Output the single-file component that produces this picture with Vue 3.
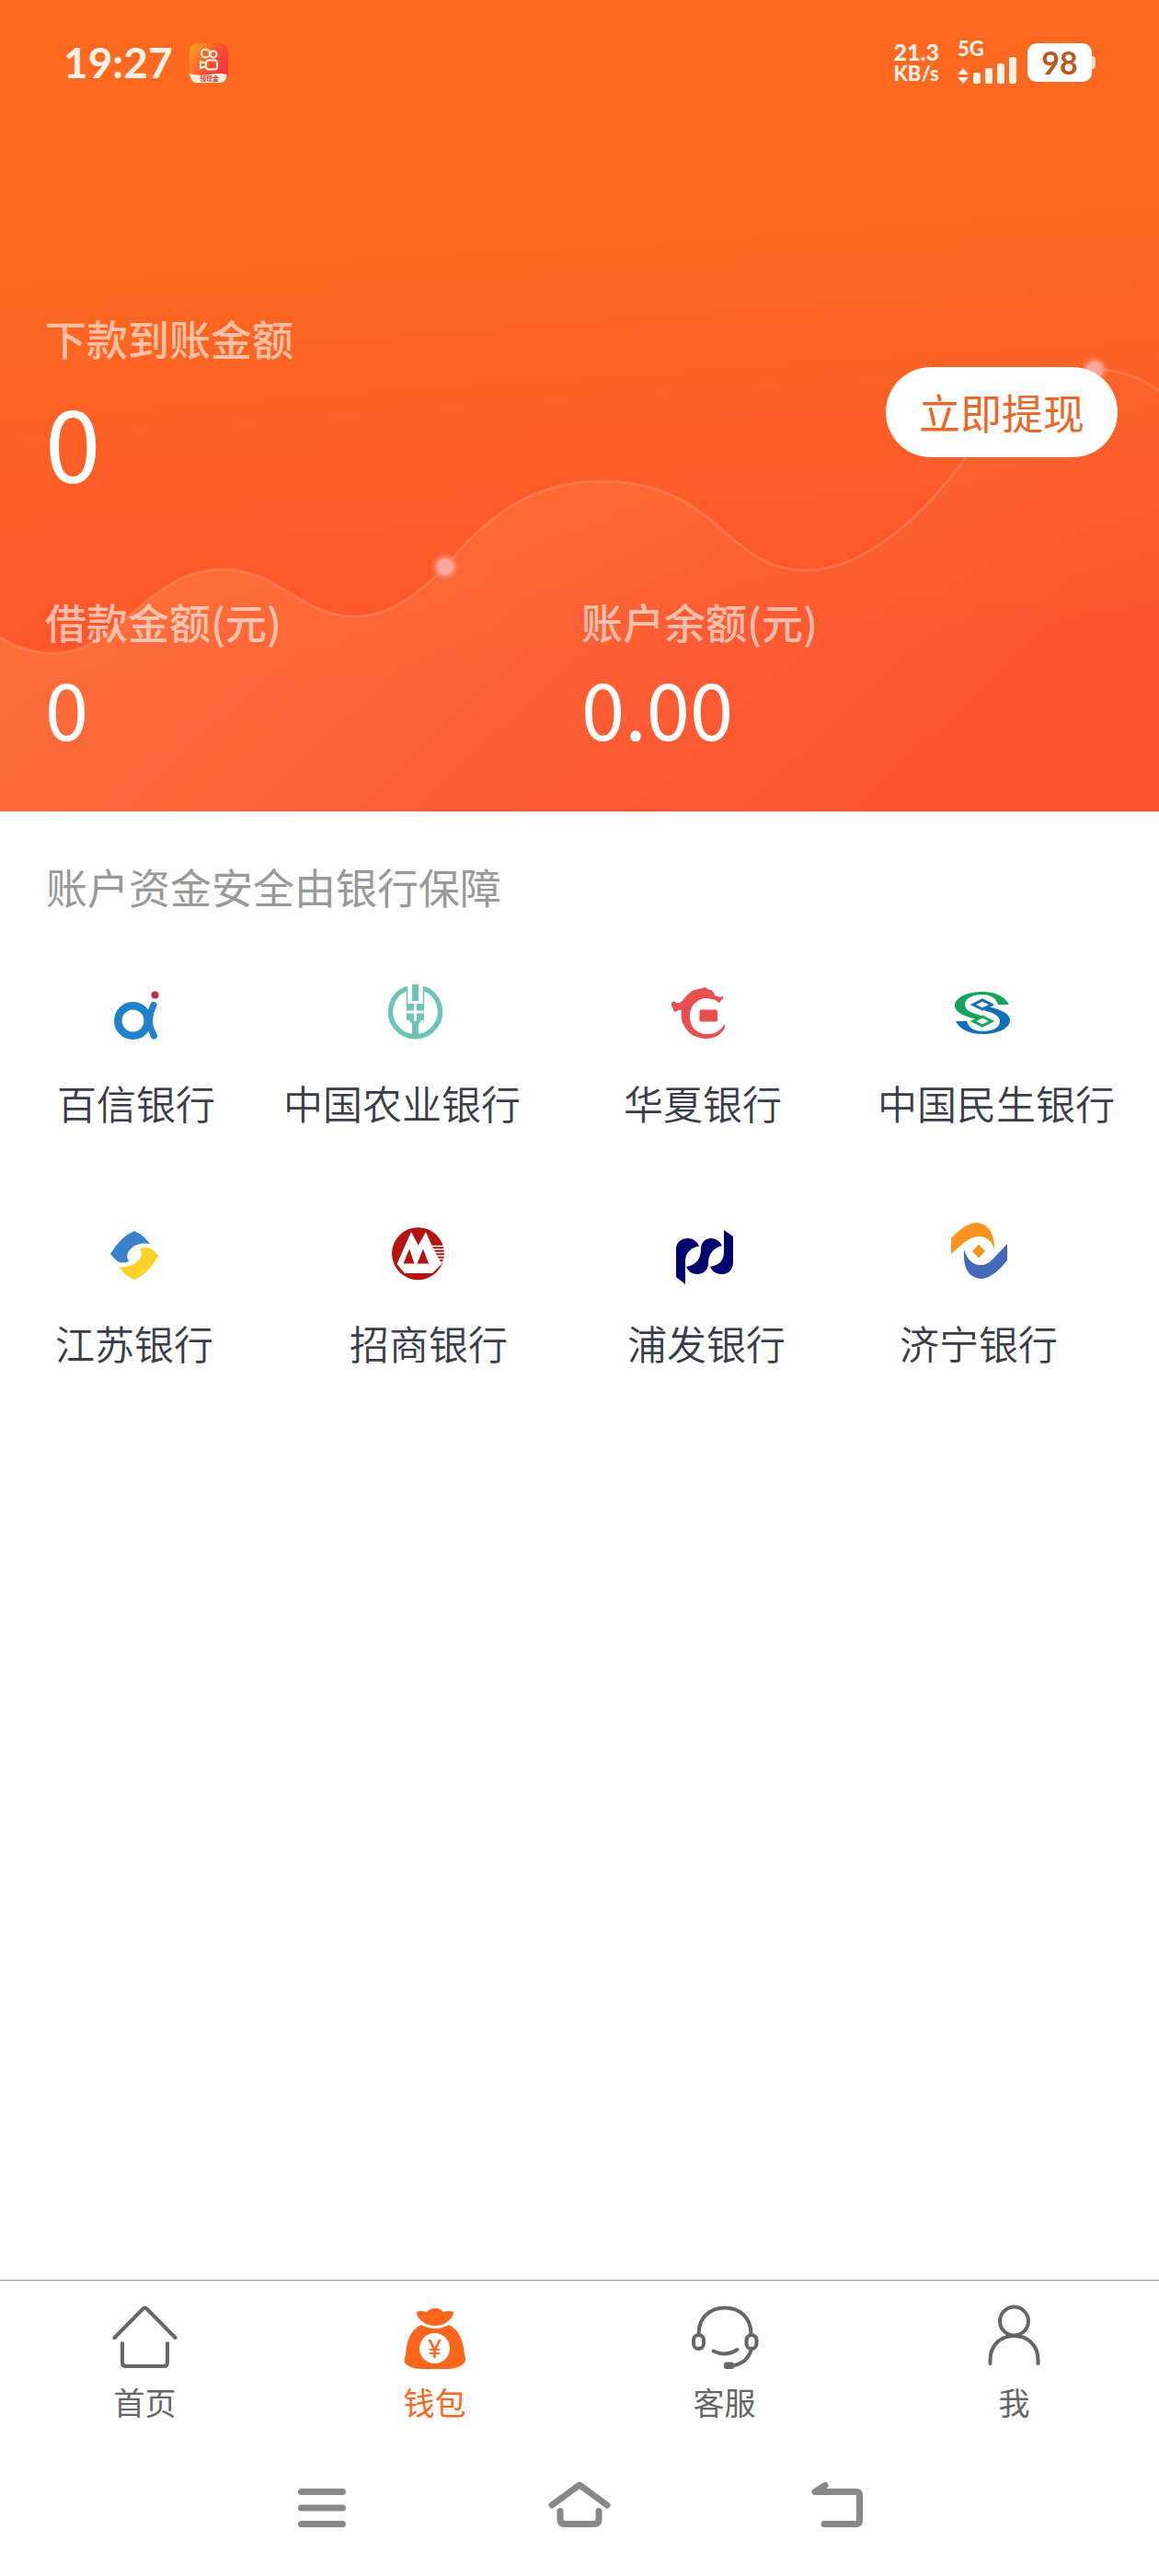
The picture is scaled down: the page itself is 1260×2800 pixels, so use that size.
<template>
  <div class="wallet-page">
    <header class="hero">
      <svg class="wave" viewBox="0 0 1260 882" preserveAspectRatio="none" aria-hidden="true">
        <defs>
          <linearGradient id="waveFill" gradientUnits="userSpaceOnUse" x1="60" y1="560" x2="640" y2="1180">
            <stop offset="0" stop-color="#ff9450" stop-opacity="0.42" />
            <stop offset="0.5" stop-color="#ff8a50" stop-opacity="0.24" />
            <stop offset="1" stop-color="#ff7a50" stop-opacity="0" />
          </linearGradient>
          <radialGradient id="dotGlow">
            <stop offset="0.5" stop-color="#ffa79c" />
            <stop offset="0.65" stop-color="#ffa08c" stop-opacity="0.5" />
            <stop offset="1" stop-color="#ff8060" stop-opacity="0" />
          </radialGradient>
        </defs>
        <path :d="wavePath + ' V882 H0 Z'" fill="url(#waveFill)" />
        <path :d="wavePath" fill="none" stroke="#ff8a66" stroke-opacity="0.5" stroke-width="3" />
        <circle cx="484" cy="616" r="16" fill="url(#dotGlow)" />
        <circle cx="1190" cy="402" r="16" fill="url(#dotGlow)" />
      </svg>

      <div class="status-bar">
        <span class="clock">19:27</span>
        <svg class="app-icon" viewBox="0 0 42 43" aria-hidden="true">
          <defs>
            <linearGradient id="appBg" x1="0" y1="0" x2="1" y2="0.6">
              <stop offset="0" stop-color="#fba61f" />
              <stop offset="0.55" stop-color="#fb5a2c" />
              <stop offset="1" stop-color="#f23240" />
            </linearGradient>
          </defs>
          <rect width="42" height="43" rx="9" fill="url(#appBg)" />
          <path d="M0 33 Q10 36 22 34 T41 34 Q40 43 32 43 H9 Q1 43 0 33Z" fill="#fff1dc" />
          <g fill="none" stroke="#fff4e6" stroke-width="2">
            <circle cx="17.500" cy="11" r="4.500" />
            <circle cx="26" cy="12" r="3.500" />
            <rect x="18" y="18.500" width="12" height="10" rx="3" />
            <path d="M18 22 L12 20 V27 L18 25" />
          </g>
          <text x="11" y="41" font-size="7" font-weight="700" fill="#d8402c">领现金</text>
        </svg>
        <span class="spacer"></span>
        <span class="speed"><b>21.3</b><small>KB/s</small></span>
        <span class="signal">
          <b>5G</b>
          <svg viewBox="0 0 64 30" aria-hidden="true">
            <g fill="#fff1e8">
              <path d="M6 13 L12 20 H0Z M0 23 H12 L6 30Z" />
              <rect x="17" y="18" width="8" height="12" rx="2" />
              <rect x="30" y="13" width="8" height="17" rx="2" />
              <rect x="43" y="8" width="8" height="22" rx="2" />
              <rect x="56" y="1" width="8" height="29" rx="2" />
            </g>
          </svg>
        </span>
        <span class="battery">98</span>
      </div>

      <section class="payout">
        <div>
          <p class="label">下款到账金额</p>
          <p class="amount large">0</p>
        </div>
        <button type="button" class="withdraw">立即提现</button>
      </section>

      <section class="balances">
        <div v-for="item in balances" :key="item.label">
          <p class="label">{{ item.label }}</p>
          <p class="amount">{{ item.value }}</p>
        </div>
      </section>
    </header>

    <main class="banks">
      <h2>账户资金安全由银行保障</h2>

      <ul class="bank-row first">
        <li>
          <svg viewBox="0 0 64 64" aria-hidden="true">
            <g fill="none" stroke="#2181ca" stroke-linecap="round">
              <circle cx="28.500" cy="39.500" r="16.200" stroke-width="8.500" />
              <path d="M51 22.500 Q47 30 46.500 38 Q46 46 51.500 56" stroke-width="7" />
              <path d="M43 30 V49" stroke-width="5" />
            </g>
            <circle cx="52.500" cy="11.500" r="4" fill="#c02d38" />
          </svg>
          <span>百信银行</span>
        </li>
        <li class="start">
          <svg viewBox="0 0 64 64" aria-hidden="true">
            <g fill="none" stroke="#6cc4b8">
              <path d="M23 4.500 A27 27 0 1 0 42 4.500" stroke-width="5.500" />
              <path d="M23.500 2 V22 M41.500 2 V22" stroke-width="1.500" />
            </g>
            <g fill="#6cc4b8">
              <rect x="29" y="0" width="7" height="18" />
              <path d="M23 21 H31 V28.500 H23Z M34 21 H42 V28.500 H34Z" />
              <path d="M23 31.500 H31 V39 H23Z M34 31.500 H42 V39 H34Z" />
              <path d="M26 39 H39 L36 43 V58 H29 V43Z" />
            </g>
            <path d="M32.500 18 V40" stroke="#fff" stroke-width="2" />
          </svg>
          <span>中国农业银行</span>
        </li>
        <li class="end">
          <svg viewBox="0 0 64 64" aria-hidden="true">
            <path d="M3 20 Q6 17 8 20 Q14 21 17 15 Q23 8 28 6 Q35 5 40 3 Q42 6 46 6 Q49 8 50 12 Q55 15 59 13 Q60 16 57 17 Q56 20 54 20 Q51 16 46 16 Q36 13 29 20 Q23 25 23 34 Q23 52 40 54 Q54 55 60 44 Q62 43 61 47 Q55 59 40 59 Q24 58 18 47 Q12 38 14 28 Q10 27 8 30 Q4 29 5 26 Q2 24 3 20Z" fill="#e8504f" />
            <rect x="33.500" y="27.500" width="19.500" height="13" rx="2" fill="#e8504f" />
          </svg>
          <span>华夏银行</span>
        </li>
        <li class="end">
          <svg viewBox="0 0 64 64" aria-hidden="true">
            <g>
              <path d="M61 22 C56 12 44 8 32 8 C14 8 2 15 2 23 C2 31 14 35 26 38 L31 34 C20 31 13 28 13 22 C13 15 21 11 32 11 C41 11 47 15 49 22Z" fill="#16a45c" />
              <path d="M32 35 L42 40 L32 45 L22 40Z" fill="none" stroke="#16a45c" stroke-width="3" />
            </g>
            <g transform="rotate(180 32 31)">
              <path d="M61 22 C56 12 44 8 32 8 C14 8 2 15 2 23 C2 31 14 35 26 38 L31 34 C20 31 13 28 13 22 C13 15 21 11 32 11 C41 11 47 15 49 22Z" fill="#1270b8" />
              <path d="M32 35 L42 40 L32 45 L22 40Z" fill="none" stroke="#1270b8" stroke-width="3" />
            </g>
          </svg>
          <span>中国民生银行</span>
        </li>
      </ul>

      <ul class="bank-row second">
        <li>
          <svg viewBox="0 0 64 64" aria-hidden="true">
            <path d="M32 7 Q42 11 49 21 Q38 19 31 24 Q21 31 26 40 Q19 43 14 40 Q10 37 6 32 Q17 13 32 7Z" fill="#3b82cb" />
            <path d="M32 60 Q22 56 15 46 Q26 47 33 42 Q43 35 38 26 Q45 24 50 26 Q54 29 58 34 Q47 54 32 60Z" fill="#fdd228" />
          </svg>
          <span>江苏银行</span>
        </li>
        <li class="end">
          <svg viewBox="0 0 64 64" aria-hidden="true">
            <circle cx="32.500" cy="31.700" r="28.500" fill="#b3140f" />
            <path d="M25 8 L32.800 22.500 L41 8 L48 24 L58 43 L48 53 H18 L9.500 43Z" fill="#fff" />
            <path d="M23 26.500 L28.500 42.500 H16.500Z M38 26.500 L44 42.500 H31.500Z" fill="#b3140f" />
            <path d="M46 23.500 H62 M47 27 H62 M49 30.500 H62 M51 34 H62 M53 37.500 H62 M55 41 H62" stroke="#fff" stroke-width="1.600" />
          </svg>
          <span>招商银行</span>
        </li>
        <li class="end">
          <svg viewBox="0 0 64 64" aria-hidden="true">
            <g fill="#00006e">
              <path d="M2 57 V27 C2 19 8 15 14.500 15 C20 15 25 18 27 23.500 C18 25 12 31 12 40 V65Z" />
              <path d="M52 23 C50 18 45 15 40 15 C33 15 29 20 29 27 C29 37 24 44 13 46 C15 51 20 54 25 54 C32 54 37 49 37 42 C37 32 42 26 52 23Z" />
              <path d="M54 6 L64 13 V41 C64 49 59 54 52 54 C46 54 41 51 39 46 C49 44 54 39 54 30Z" />
            </g>
          </svg>
          <span>浦发银行</span>
        </li>
        <li>
          <svg viewBox="0 0 64 64" aria-hidden="true">
            <path d="M2 32 V15 Q18 -2 30 -2 Q49 0 49 27 Q45 13 32 13 Q24 13 17 19Z" fill="#f7931e" />
            <path d="M63 21 V39 Q47 59 34 59 Q14 57 16 27 Q21 44 34 44 Q41 44 47 38Z" fill="#4668b8" />
            <path d="M32 21.500 L39 29 L32 36.500 L25 29Z" fill="#f7931e" />
          </svg>
          <span>济宁银行</span>
        </li>
      </ul>
    </main>

    <nav class="tab-bar">
      <a href="#home" @click.prevent="active = 'home'" :class="{ active: active === 'home' }">
        <svg viewBox="0 0 72 72" class="line" aria-hidden="true">
          <path d="M2.500 36 L33.500 4.500 Q35.500 2.500 37.500 4.500 L68.500 36" />
          <path d="M11 40.500 V63 Q11 67 15 67 H56 Q60 67 60 63 V40.500" stroke-linecap="butt" />
        </svg>
        <span>首页</span>
      </a>
      <a href="#wallet" @click.prevent="active = 'wallet'" :class="{ active: active === 'wallet' }">
        <svg viewBox="0 0 72 72" aria-hidden="true">
          <g fill="currentColor">
            <path d="M16 8 Q20 6 27 8 Q30 4 36 4 Q42 4 45 8 Q52 6 56 8 Q57 14 46 21 Q36 25 26 21 Q15 14 16 8Z" />
            <path d="M21 22 Q36 30 51 22 Q66 29 68 55 Q70 58 68 63 Q62 70 50 70 H22 Q8 70 3 63 Q2 58 4 55 Q5 29 21 22Z" />
          </g>
          <circle cx="35.500" cy="47.500" r="16.500" fill="#fff" />
          <text x="35.500" y="58" class="yen" fill="currentColor">¥</text>
        </svg>
        <span>钱包</span>
      </a>
      <a href="#service" @click.prevent="active = 'service'" :class="{ active: active === 'service' }">
        <svg viewBox="0 0 72 72" class="line" aria-hidden="true">
          <path d="M7.500 32 C7.500 14 20 3.500 36 3.500 S64.500 14 64.500 32" />
          <rect x="2" y="33" width="11" height="15" rx="5.500" />
          <rect x="59.500" y="33" width="11" height="15" rx="5.500" />
          <path d="M23.500 50.500 Q37 57 49.500 49" />
          <path d="M64.500 49 Q61 63 45 66.500" />
          <rect x="37" y="64.500" width="7" height="3.500" rx="1" fill="currentColor" />
        </svg>
        <span>客服</span>
      </a>
      <a href="#me" @click.prevent="active = 'me'" :class="{ active: active === 'me' }">
        <svg viewBox="0 0 72 72" class="line" aria-hidden="true">
          <circle cx="35.500" cy="18" r="15.500" />
          <path d="M9.500 64 V60 C9.500 44 21 34 35.500 34 S61.500 44 61.500 60 V64" />
        </svg>
        <span>我</span>
      </a>
    </nav>

    <div class="system-nav">
      <button type="button" aria-label="菜单">
        <svg viewBox="0 0 72 60"><path d="M13.500 15.500 H58.500 M13.500 33 H58.500 M13.500 50.500 H58.500" /></svg>
      </button>
      <button type="button" aria-label="主屏幕">
        <svg viewBox="0 0 72 60">
          <path d="M6 30 L36 8 L66 30" />
          <path d="M15 36.500 V45 Q15 50.500 20 50.500 H52 Q57 50.500 57 45 V36.500" />
        </svg>
      </button>
      <button type="button" aria-label="返回">
        <svg viewBox="0 0 72 60"><path d="M23 8.500 L12 15.500 H57 Q60.500 15.500 60.500 19 V47 Q60.500 50.500 57 50.500 H22" /></svg>
      </button>
    </div>
  </div>
</template>

<script setup>
import { ref } from 'vue'

const active = ref('wallet')

const balances = [
  { label: '借款金额(元)', value: '0' },
  { label: '账户余额(元)', value: '0.00' }
]

// 头部曲线，描边和填充共用
const wavePath =
  'M0 693 C20 705 38 710 58 710 C130 710 160 619 241 619 C305 619 325 670 386 670 ' +
  'C425 670 455 645 484 616 C530 560 580 523 654 523 C780 523 790 620 875 620 ' +
  'C940 620 1005 560 1050 497 C1090 430 1140 402 1190 402 C1215 401 1240 410 1260 425'
</script>

<style>
body {
  margin: 0;
  background: #fefefe;
}
</style>

<style scoped>
.wallet-page {
  display: flex;
  flex-direction: column;
  min-height: 100vh;
  font-family: "Noto Sans CJK SC", sans-serif;
  background: #fefefe;
}
p,
h2,
ul {
  margin: 0;
  padding: 0;
  font-weight: 400;
}
svg {
  display: block;
  overflow: visible;
}
button {
  border: 0;
  padding: 0;
  font-family: inherit;
  cursor: pointer;
}

/* 头部 */
.hero {
  position: relative;
  padding: 0 45px 52px 49px;
  color: #fff;
  background: linear-gradient(176deg, #fd691f 30%, #fc552e 78%);
}
.hero > * {
  position: relative;
}
.hero > .wave {
  position: absolute;
  top: 0;
  left: 0;
  width: 100%;
  height: 100%;
  overflow: hidden;
}
.status-bar {
  display: flex;
  align-items: center;
  height: 136px;
  padding: 0 28px 0 20px;
  font-family: Lato, sans-serif;
  font-weight: 700;
  color: #fff1e8;
}
.clock {
  font-size: 46px;
  line-height: 56px;
}
.app-icon {
  width: 42px;
  height: 43px;
  margin-left: 18px;
  font-family: "Noto Sans CJK SC", sans-serif;
}
.spacer {
  flex: 1;
}
.speed {
  display: flex;
  flex-direction: column;
  font-weight: 900;
}
.speed b {
  font-size: 25px;
  font-weight: 900;
  line-height: 24px;
}
.speed small {
  font-size: 22px;
  line-height: 24px;
}
.signal {
  display: flex;
  flex-direction: column;
  margin-left: 20px;
}
.signal b {
  font-size: 22px;
  font-weight: 900;
  line-height: 16px;
}
.signal svg {
  width: 64px;
  height: 30px;
}
.battery {
  position: relative;
  width: 70px;
  margin-left: 12px;
  border-radius: 10px;
  font-size: 34px;
  line-height: 42px;
  text-align: center;
  color: #b9581f;
  background: #fff;
}
.battery::after {
  content: "";
  position: absolute;
  left: 100%;
  top: 14px;
  width: 4px;
  height: 14px;
  border-radius: 0 4px 4px 0;
  background: #ffd9c4;
}
.payout {
  display: flex;
  align-items: center;
  justify-content: space-between;
  margin-top: 202px;
}
.label {
  font-size: 45px;
  font-weight: 500;
  line-height: 60px;
  color: rgba(255, 255, 255, 0.6);
}
.amount {
  font-size: 85px;
  line-height: 124px;
}
.amount.large {
  font-size: 109px;
  line-height: 160px;
}
.withdraw {
  padding: 0 36px;
  border-radius: 49px;
  font-size: 45px;
  line-height: 98px;
  color: #e8682a;
  background: #fff;
}
.balances {
  display: grid;
  grid-template-columns: 1fr 1fr;
  margin-top: 88px;
}

/* 银行 */
.banks {
  flex: 1;
}
.banks h2 {
  padding: 50px 50px 0;
  font-size: 45px;
  line-height: 64px;
  color: #999;
}
.bank-row {
  display: grid;
  list-style: none;
  font-size: 43px;
  font-weight: 350;
  line-height: 60px;
  color: #3a3d48;
  white-space: nowrap;
}
.bank-row.first {
  grid-template-columns: 172fr 286fr 182fr 288fr;
  gap: 74px;
  margin-top: 74px;
  padding: 0 48px 0 62px;
}
.bank-row.second {
  grid-template-columns: 172fr 196fr 178fr 172fr;
  gap: 124px;
  margin-top: 103px;
  padding: 0 110px 0 60px;
}
.bank-row li {
  display: flex;
  flex-direction: column;
  align-items: center;
  min-width: 0;
}
.bank-row svg {
  width: 64px;
  height: 64px;
  margin-bottom: 34px;
}
.bank-row .start span {
  align-self: flex-start;
}
.bank-row .end span {
  align-self: flex-end;
}

/* 底部标签 */
.tab-bar {
  display: grid;
  grid-template-columns: repeat(4, 1fr);
  padding: 26px 0 62px;
  border-top: 1px solid #999;
}
.tab-bar a {
  display: flex;
  flex-direction: column;
  align-items: center;
  gap: 14px;
  font-size: 34px;
  line-height: 40px;
  color: #666;
  text-decoration: none;
}
.tab-bar a.active {
  color: #fd661c;
}
.tab-bar svg {
  width: 72px;
  height: 72px;
}
.line {
  fill: none;
  stroke: currentColor;
  stroke-width: 4;
  stroke-linecap: round;
}
.yen {
  font-family: Roboto, sans-serif;
  font-size: 28px;
  font-weight: 400;
  text-anchor: middle;
}
.system-nav {
  display: grid;
  grid-template-columns: repeat(3, 1fr);
  justify-items: center;
  padding: 0 calc(100% / 6) 47px;
}
.system-nav button {
  background: none;
}
.system-nav svg {
  width: 72px;
  height: 60px;
  fill: none;
  stroke: #888;
  stroke-width: 7;
  stroke-linecap: round;
  stroke-linejoin: round;
}
</style>
